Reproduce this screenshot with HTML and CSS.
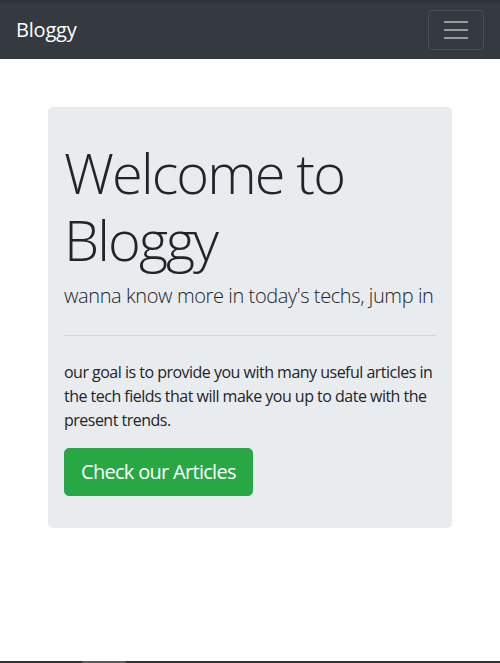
FILE: index.html
```html
<!DOCTYPE html>
<html lang="en">
<head>
<meta charset="utf-8">
<title>Bloggy</title>
<link rel="stylesheet" href="styles.css">
</head>
<body>
<nav class="navbar">
  <a class="brand" href="#">Bloggy</a>
  <button class="toggler" type="button" aria-label="Toggle navigation">
    <svg class="toggler-icon" width="30" height="30" viewBox="0 0 30 30"><path stroke="rgba(255,255,255,0.5)" stroke-linecap="butt" stroke-miterlimit="10" stroke-width="2" d="M3 7h24M3 15h24M3 23h24"/></svg>
  </button>
</nav>
<main class="container">
  <section class="jumbotron">
    <h1 class="display">Welcome to Bloggy</h1>
    <p class="lead">wanna know more in today's techs, jump in</p>
    <hr class="divider">
    <p class="text">our goal is to provide you with many useful articles in the tech fields that will make you up to date with the present trends.</p>
    <a class="btn" href="#">Check our Articles</a>
  </section>
</main>
<div class="bottom-bar"><span class="bottom-thumb"></span></div>
</body>
</html>
```
FILE: styles.css
```css
* { box-sizing: border-box; }
html, body { margin: 0; padding: 0; }
body {
  font-family: "Open Sans", "Noto Sans", sans-serif;
  font-size: 16px;
  line-height: 1.5;
  color: #212529;
  background: #fff;
}
.navbar {
  display: flex;
  align-items: center;
  justify-content: space-between;
  height: 59px;
  padding: 8px 16px;
  background: #343a40;
  border-top: 3px solid #2f333b;
}
.brand {
  color: #fff;
  text-decoration: none;
  font-size: 20px;
  line-height: 30px;
  margin-top: -2px;
  letter-spacing: -0.01em;
}
.toggler {
  width: 56px;
  height: 40px;
  margin-top: -2px;
  padding: 0;
  display: flex;
  align-items: center;
  justify-content: center;
  background: transparent;
  border: 1px solid rgba(255,255,255,0.1);
  border-radius: 4px;
}
.toggler-icon { display: block; }
.container { padding: 48px; }
.jumbotron {
  background: #e9ecef;
  border-radius: 5px;
  padding: 32px 16px;
}
.display {
  margin: 0 0 8px;
  font-size: 56px;
  font-weight: 300;
  line-height: 1.2;
  letter-spacing: -0.034em;
}
.lead {
  margin: 0 0 16px;
  font-size: 20px;
  font-weight: 300;
  line-height: 1.5;
  letter-spacing: -0.02em;
}
.divider {
  margin: 24px 0;
  border: 0;
  border-top: 1px solid rgba(0,0,0,0.1);
}
.text {
  margin: 0 0 16px;
  letter-spacing: -0.032em;
}
.btn {
  display: inline-block;
  padding: 8px 16px;
  font-size: 20px;
  line-height: 1.5;
  color: #fff;
  background: #28a745;
  border: 1px solid #28a745;
  border-radius: 5px;
  text-decoration: none;
  letter-spacing: -0.035em;
}
.bottom-bar {
  position: fixed;
  left: 0; right: 0; bottom: 0;
  height: 2px;
  background: #333;
}
.bottom-thumb {
  position: absolute;
  left: 82px;
  width: 44px;
  top: 0; bottom: 0;
  background: #5a5a5a;
}
```
